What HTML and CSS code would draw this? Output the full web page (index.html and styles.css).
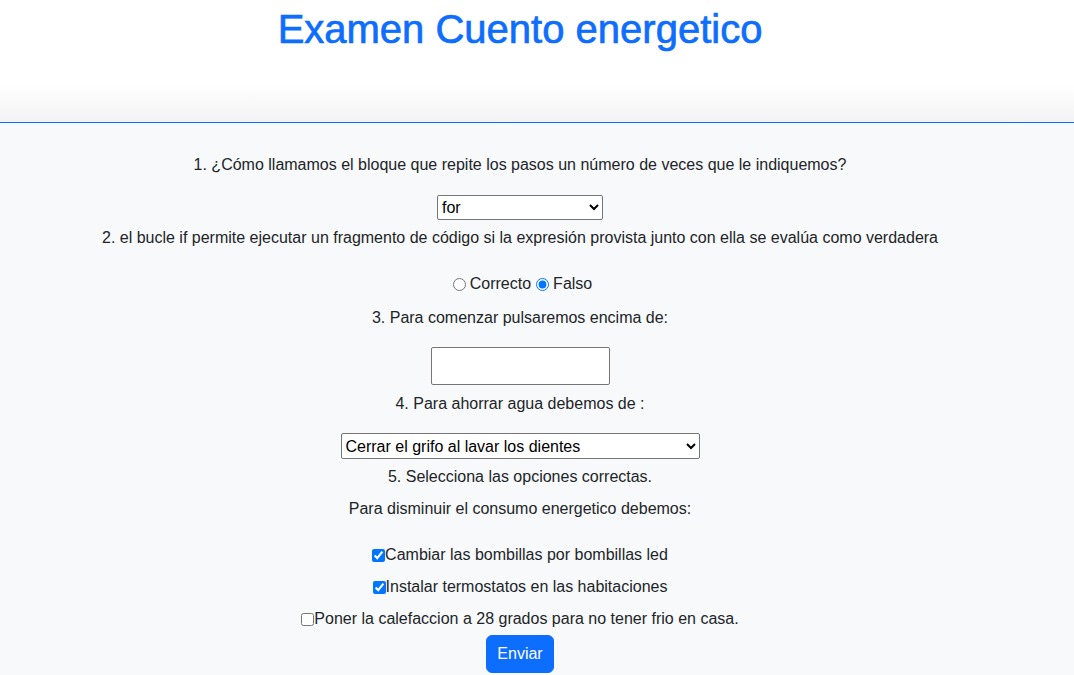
FILE: index.html
```html
<!DOCTYPE html>
<html lang="es">
<head>
  <meta charset="UTF-8">
  <title>Examen Cuento energetico</title>
  <meta name="viewport" content="width=device-width, initial-scale=1.0">
  <link rel="stylesheet" href="styles.css">
</head>
<body>
  <header class="cabecera">
    <h1>Examen Cuento energetico</h1>
  </header>
  <div class="linea"></div>

  <form class="examen" onsubmit="return false">
    <p class="pregunta p1">1. ¿Cómo llamamos el bloque que repite los pasos un número de veces que le indiquemos?</p>
    <select class="sel-corto">
      <option>for</option>
      <option>while</option>
      <option>if</option>
    </select>

    <p class="pregunta p2">2. el bucle if permite ejecutar un fragmento de código si la expresión provista junto con ella se evalúa como verdadera</p>
    <div class="fila radios">
      <input type="radio" name="p2" id="correcto"><label for="correcto">Correcto</label>
      <input type="radio" name="p2" id="falso" checked><label for="falso">Falso</label>
    </div>

    <p class="pregunta p3">3. Para comenzar pulsaremos encima de:</p>
    <input type="text" class="respuesta">

    <p class="pregunta p4">4. Para ahorrar agua debemos de :</p>
    <select class="sel-largo">
      <option>Cerrar el grifo al lavar los dientes</option>
      <option>Dejar el grifo abierto</option>
    </select>

    <p class="pregunta p5">5. Selecciona las opciones correctas.</p>
    <p class="pregunta p6">Para disminuir el consumo energetico debemos:</p>

    <div class="fila check c1">
      <input type="checkbox" id="op1" checked><label for="op1">Cambiar las bombillas por bombillas led</label>
    </div>
    <div class="fila check">
      <input type="checkbox" id="op2" checked><label for="op2">Instalar termostatos en las habitaciones</label>
    </div>
    <div class="fila check">
      <input type="checkbox" id="op3"><label for="op3">Poner la calefaccion a 28 grados para no tener frio en casa.</label>
    </div>

    <button type="submit" class="enviar">Enviar</button>
  </form>
</body>
</html>
```

FILE: styles.css
```css
body {
  margin: 0;
  font-family: "Liberation Sans", Arial, sans-serif;
  font-size: 16px;
  line-height: 1.5;
  color: #212529;
  background: #f8f9fa;
}

.cabecera {
  height: 122px;
  background: linear-gradient(to bottom, #ffffff 70%, #f3f2f4 100%);
  padding-right: 34px;
  text-align: center;
}

.cabecera h1 {
  margin: 0;
  padding-top: 5px;
  font-size: 40px;
  font-weight: 500;
  line-height: 1.2;
  color: #0d6efd;
  -webkit-text-stroke: 0.7px #0d6efd;
}

.linea {
  height: 1px;
  background: #0d6efd;
}

.examen {
  display: flex;
  flex-direction: column;
  align-items: center;
  padding: 28px 34px 0 0;
  text-align: center;
}

.pregunta {
  margin: 0;
  height: 22px;
  padding-top: 2px;
}

.p2 { margin-top: 4px; }
.p3 { margin-top: 9px; }
.p4 { margin-top: 5px; }
.p5 { margin-top: 4px; }
.p6 { margin-top: 8px; }

select {
  font-family: inherit;
  font-size: 16px;
  color: #000;
  background: #fff;
  border: 1px solid #767676;
  border-radius: 2px;
  box-sizing: border-box;
}

.sel-corto {
  margin-top: 20px;
  width: 166px;
  height: 25px;
}

.sel-largo {
  margin-top: 19px;
  width: 359px;
  height: 26px;
}

.respuesta {
  margin-top: 19px;
  width: 179px;
  height: 38px;
  box-sizing: border-box;
  border: 1px solid #767676;
  border-radius: 2px;
  background: #fff;
}

.fila {
  display: flex;
  align-items: center;
  height: 22px;
  padding-top: 2px;
}

.radios {
  margin-top: 23px;
}

.radios input {
  margin: 0 4px 0 5px;
}

.check {
  margin-top: 8px;
}

.check.c1 {
  margin-top: 23px;
}

.check input {
  margin: 0;
  width: 13px;
  height: 13px;
}

.enviar {
  margin-top: 5px;
  width: 68px;
  height: 38px;
  padding: 0;
  font-family: inherit;
  font-size: 16px;
  color: #fff;
  background: #0d6efd;
  border: 1px solid #0d6efd;
  border-radius: 6px;
}
```
